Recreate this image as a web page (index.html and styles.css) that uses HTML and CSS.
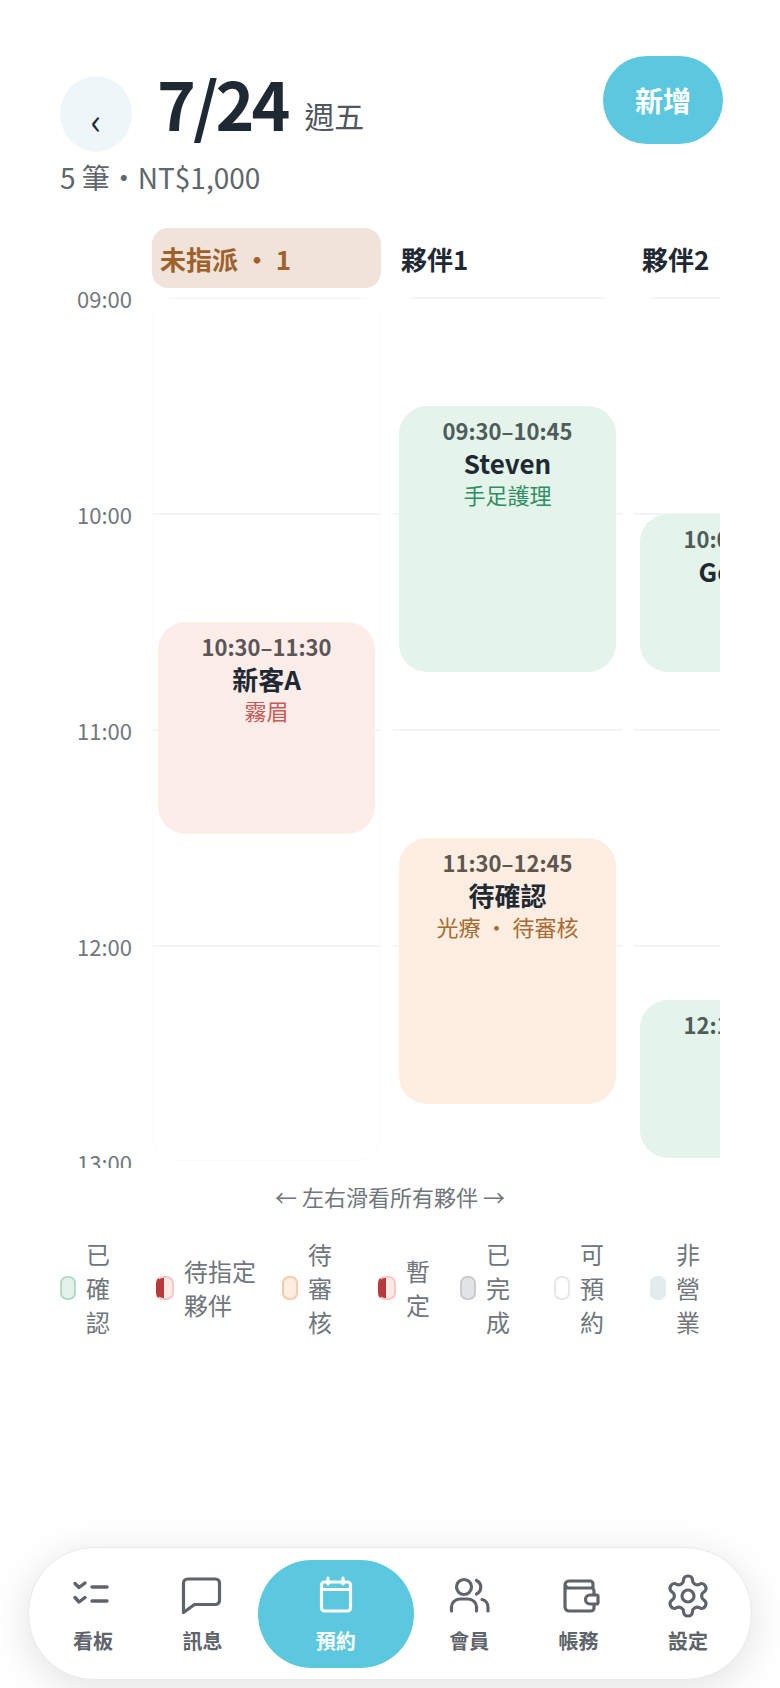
FILE: index.html
```html
<!DOCTYPE html>
<html lang="zh-Hant">
<head>
  <meta charset="UTF-8" />
  <meta name="viewport" content="width=device-width, initial-scale=1" />
  <title>預約</title>
  <link rel="stylesheet" href="styles.css">
</head>
<body>
  <div class="page">
    <header class="top">
      <div class="top-left">
        <div class="date-row">
          <button class="btn-back">‹</button>
          <h1 class="date">7/24</h1>
          <span class="weekday">週五</span>
        </div>
        <div class="summary">5 筆・NT$1,000</div>
      </div>
      <button class="btn-add">新增</button>
    </header>

    <section class="schedule">
      <div class="hours">
        <div class="hour">09:00</div>
        <div class="hour">10:00</div>
        <div class="hour">11:00</div>
        <div class="hour">12:00</div>
        <div class="hour">13:00</div>
      </div>
      <div class="columns">
        <div class="col">
          <div class="col-head col-head-open">未指派 ・ 1</div>
          <div class="col-body col-body-open">
            <div class="card card-red" style="top:325px;height:212px">
              <div class="card-time">10:30–11:30</div>
              <div class="card-name">新客A</div>
              <div class="card-service">霧眉</div>
            </div>
          </div>
        </div>
        <div class="col">
          <div class="col-head">夥伴1</div>
          <div class="col-body">
            <div class="card card-green" style="top:109px;height:266px">
              <div class="card-time">09:30–10:45</div>
              <div class="card-name">Steven</div>
              <div class="card-service">手足護理</div>
            </div>
            <div class="card card-orange" style="top:541px;height:266px">
              <div class="card-time">11:30–12:45</div>
              <div class="card-name">待確認</div>
              <div class="card-service">光療 ・ 待審核</div>
            </div>
          </div>
        </div>
        <div class="col">
          <div class="col-head">夥伴2</div>
          <div class="col-body">
            <div class="card card-green" style="top:217px;height:158px">
              <div class="card-time">10:00–10:45</div>
              <div class="card-name">Georgia</div>
              <div class="card-service">美甲</div>
            </div>
            <div class="card card-green" style="top:703px;height:158px">
              <div class="card-time">12:15–13:00</div>
              <div class="card-name">Amy</div>
              <div class="card-service">美甲</div>
            </div>
          </div>
        </div>
      </div>
    </section>

    <div class="hint">← 左右滑看所有夥伴 →</div>

    <div class="legend">
      <div class="legend-item"><span class="swatch swatch-green"></span><span class="legend-text">已確認</span></div>
      <div class="legend-item"><span class="swatch swatch-split"></span><span class="legend-text legend-text-wide">待指定夥伴</span></div>
      <div class="legend-item"><span class="swatch swatch-orange"></span><span class="legend-text">待審核</span></div>
      <div class="legend-item"><span class="swatch swatch-split"></span><span class="legend-text">暫定</span></div>
      <div class="legend-item"><span class="swatch swatch-gray"></span><span class="legend-text">已完成</span></div>
      <div class="legend-item"><span class="swatch swatch-white"></span><span class="legend-text">可預約</span></div>
      <div class="legend-item"><span class="swatch swatch-closed"></span><span class="legend-text">非營業</span></div>
    </div>

    <nav class="tabbar">
      <a class="tab">
        <svg class="tab-icon" viewBox="0 0 44 44"><path d="M4 9.500l4 4 6-4.500M4 23.500l4 4.500 6-4.500M21 13h15M21 27h15" stroke-width="3.400"/></svg>
        <span>看板</span>
      </a>
      <a class="tab">
        <svg class="tab-icon" viewBox="0 0 44 44"><path d="M3.500 38.500V9a4 4 0 0 1 4-4h28a4 4 0 0 1 4 4v17.500a4 4 0 0 1-4 4H14.500z"/></svg>
        <span>訊息</span>
      </a>
      <a class="tab tab-active">
        <svg class="tab-icon" viewBox="0 0 44 44"><rect x="7.500" y="8" width="29" height="29" rx="3"/><path d="M7.500 15.500h29M14 4v6M29 4v6"/></svg>
        <span>預約</span>
      </a>
      <a class="tab">
        <svg class="tab-icon" viewBox="0 0 44 44"><circle cx="17" cy="13" r="7.500"/><path d="M4.500 37v-4a8.500 8 0 0 1 8.500-8h8a8.500 8 0 0 1 8.500 8v4M29.500 6.500a7.500 7.500 0 0 1 0 13.500M35 25.500a7 8 0 0 1 6 8V37"/></svg>
        <span>會員</span>
      </a>
      <a class="tab">
        <svg class="tab-icon" viewBox="0 0 44 44"><path d="M36 13.500V10a3 3 0 0 0-3-3H12a4 4 0 0 0-4 4v22a4 4 0 0 0 4 4h22a3 3 0 0 0 3-3v-4M8 11a4 4 0 0 0 4 3h22a3 3 0 0 1 3 3v4M33 21h6.500a1.500 1.500 0 0 1 1.500 1.500v6a1.500 1.500 0 0 1-1.500 1.500H33a4.500 4.500 0 0 1 0-9z"/></svg>
        <span>帳務</span>
      </a>
      <a class="tab">
        <svg class="tab-icon tab-icon-gear" viewBox="0 0 24 24"><path stroke-width="1.600" d="M12.220 2h-.44a2 2 0 0 0-2 2v.18a2 2 0 0 1-1 1.730l-.43.25a2 2 0 0 1-2 0l-.15-.08a2 2 0 0 0-2.730.73l-.22.38a2 2 0 0 0 .73 2.730l.15.1a2 2 0 0 1 1 1.720v.51a2 2 0 0 1-1 1.740l-.15.09a2 2 0 0 0-.73 2.730l.22.38a2 2 0 0 0 2.730.73l.15-.08a2 2 0 0 1 2 0l.43.25a2 2 0 0 1 1 1.730V20a2 2 0 0 0 2 2h.44a2 2 0 0 0 2-2v-.18a2 2 0 0 1 1-1.730l.43-.25a2 2 0 0 1 2 0l.15.08a2 2 0 0 0 2.730-.73l.22-.39a2 2 0 0 0-.73-2.730l-.15-.08a2 2 0 0 1-1-1.740v-.5a2 2 0 0 1 1-1.740l.15-.09a2 2 0 0 0 .73-2.730l-.22-.38a2 2 0 0 0-2.730-.73l-.15.08a2 2 0 0 1-2 0l-.43-.25a2 2 0 0 1-1-1.730V4a2 2 0 0 0-2-2z"/><circle stroke-width="1.600" cx="12" cy="12" r="3"/></svg>
        <span>設定</span>
      </a>
    </nav>
  </div>
</body>
</html>
```

FILE: styles.css
```css
* {
  box-sizing: border-box;
}
body {
  margin: 0;
  background: #fff;
  color: #1f2933;
  font-family: "Noto Sans CJK TC", "Noto Sans", sans-serif;
}
.page {
  display: flex;
  flex-direction: column;
  height: 1688px;
  overflow: hidden;
}

/* header */
.top {
  display: flex;
  justify-content: space-between;
  align-items: flex-start;
  flex: none;
  height: 228px;
  padding: 56px 57px 0 60px;
}
.top-left {
  padding-top: 20px;
}
.date-row {
  display: flex;
  align-items: flex-start;
  height: 76px;
}
.btn-back {
  width: 72px;
  height: 76px;
  padding: 10px 0 0;
  border: none;
  border-radius: 50%;
  background: #eff6fa;
  color: #1f2933;
  font-family: inherit;
  font-size: 36px;
  line-height: 60px;
}
.date {
  margin: 0 0 0 25px;
  font-size: 66px;
  font-weight: 700;
  letter-spacing: -3px;
  line-height: 52px;
}
.weekday {
  margin: 19px 0 0 17px;
  color: #50565c;
  font-size: 30px;
  line-height: 40px;
}
.summary {
  margin-top: 6px;
  color: #60666c;
  font-size: 28px;
  line-height: 38px;
}
.btn-add {
  width: 120px;
  height: 88px;
  border: none;
  border-radius: 44px;
  background: #5bc8df;
  color: #fff;
  font-family: inherit;
  font-size: 28px;
  font-weight: 700;
}

/* schedule grid */
.schedule {
  display: flex;
  flex: none;
  gap: 20px;
  height: 940px;
  margin: 0 60px;
  overflow: hidden;
}
.hours {
  flex: none;
  width: 72px;
  padding-top: 55px;
}
.hour {
  height: 216px;
  color: #72787d;
  font-size: 22px;
  line-height: 30px;
  text-align: right;
}
.columns {
  display: flex;
  gap: 12px;
  flex: 1;
  overflow: hidden;
}
.col {
  flex: none;
  width: 229px;
}
.col-head {
  height: 60px;
  margin-bottom: 9px;
  padding: 0 8px;
  border-radius: 16px;
  font-size: 26px;
  font-weight: 700;
  line-height: 62px;
}
.col-head-open {
  background: #efe3da;
  color: #a0602a;
}
.col-body {
  position: relative;
  height: 864px;
  border-radius: 24px;
  background: repeating-linear-gradient(#f3f4f5 0 2px, transparent 2px 216px);
}
.col-body-open {
  border: 1px solid #fbfbfb;
  background-origin: border-box;
}
.card {
  position: absolute;
  left: 6px;
  right: 6px;
  padding-top: 6px;
  border-radius: 28px;
  text-align: center;
}
.col-body-open .card {
  left: 5px;
  right: 5px;
  margin-top: -1px;
}
.card-time {
  color: #4f5c5c;
  font-size: 22px;
  font-weight: 700;
  line-height: 36px;
}
.card-name {
  font-size: 26px;
  font-weight: 700;
  line-height: 30px;
}
.card-service {
  font-size: 22px;
  line-height: 32px;
}
.card-green {
  background: #e4f4ea;
}
.card-green .card-service {
  color: #2f8f63;
}
.card-red {
  background: #fdede9;
}
.card-red .card-time {
  color: #5c5557;
}
.card-red .card-service {
  color: #c85a5a;
}
.card-orange {
  background: #feeee2;
}
.card-orange .card-time {
  color: #5e5750;
}
.card-orange .card-service {
  color: #a86a30;
}

.hint {
  margin-top: 13px;
  color: #70767b;
  font-size: 22px;
  line-height: 30px;
  text-align: center;
}

/* legend */
.legend {
  display: grid;
  grid-template-columns: 96px 126px 96px 82px 94px 96px 66px;
  margin: 26px 0 0 60px;
}
.legend-item {
  display: flex;
  align-items: center;
  gap: 10px;
}
.legend-text {
  width: 1em;
  color: #70767b;
  font-size: 24px;
  line-height: 34px;
}
.legend-text-wide {
  width: 3em;
}
.swatch {
  flex: none;
  width: 16px;
  height: 24px;
  border: 2px solid transparent;
  border-radius: 7px;
}
.swatch-green {
  background: #e3f3ea;
  border-color: #b5dcc6;
}
.swatch-split {
  width: 18px;
  background: linear-gradient(90deg, #b83a3a 0 6px, #fdeae7 6px);
  border-color: #f7c9c4;
  border-left-color: #b83a3a;
}
.swatch-orange {
  background: #feeee2;
  border-color: #f7c9a8;
}
.swatch-gray {
  background: #e2e3e5;
  border-color: #c9cbce;
}
.swatch-white {
  background: #fff;
  border-color: #e5e7ea;
}
.swatch-closed {
  background: #e3ebee;
}

/* bottom nav */
.tabbar {
  display: flex;
  flex: none;
  gap: 1.400px;
  height: 133px;
  margin: auto 28px 8px;
  padding: 12px 10px 0;
  border: 1px solid #e8eaeb;
  border-radius: 66px;
  background: #fff;
  box-shadow: 0 8px 40px rgba(0, 0, 0, 0.12);
}
.tab {
  display: flex;
  flex-direction: column;
  align-items: center;
  flex: none;
  width: 108px;
  height: 108px;
  padding-top: 14px;
  border-radius: 54px;
  color: #5f646b;
  font-size: 20px;
  font-weight: 700;
  line-height: 30px;
}
.tab-active {
  width: 156px;
  background: #5bc8df;
  color: #fff;
}
.tab-icon {
  width: 44px;
  height: 44px;
  margin-bottom: 8px;
  fill: none;
  stroke: currentColor;
  stroke-width: 3.200;
  stroke-linecap: round;
  stroke-linejoin: round;
}
.tab-icon-gear {
  width: 48px;
  height: 48px;
  margin: -2px 0 6px;
}
```
